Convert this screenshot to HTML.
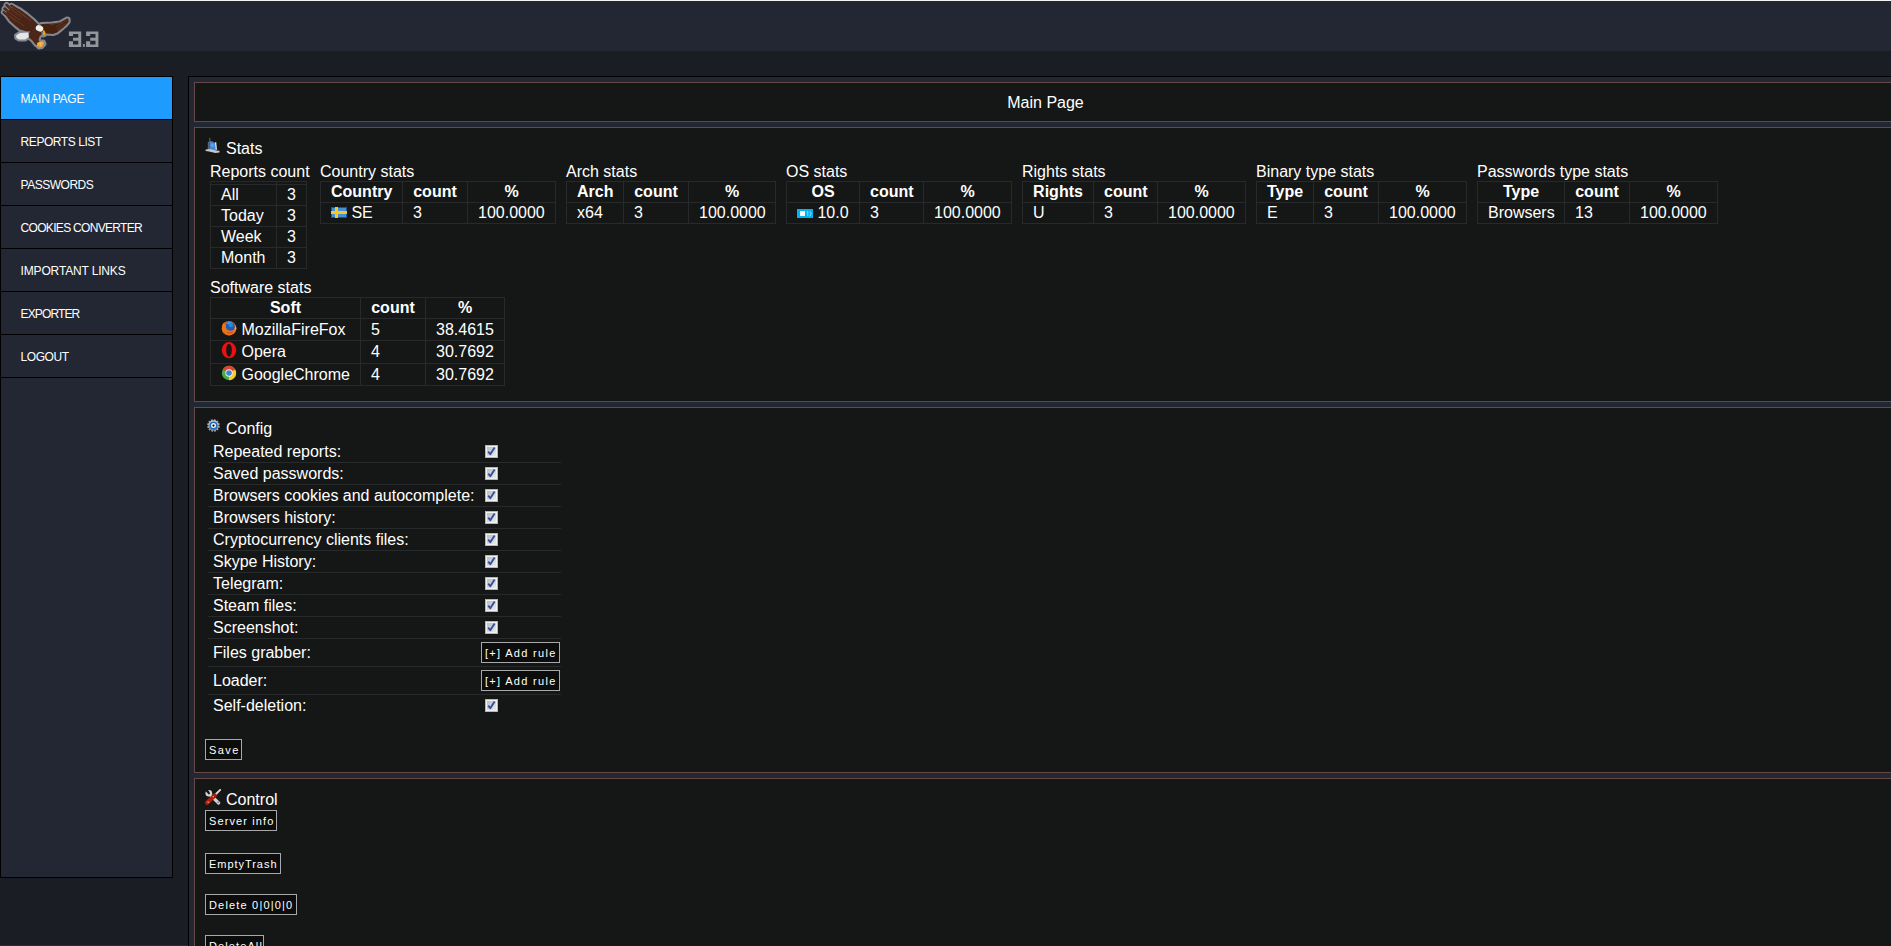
<!DOCTYPE html>
<html><head><meta charset="utf-8">
<style>
html,body{margin:0;padding:0;}
body{width:1891px;height:946px;overflow:hidden;background:#1b1d25;font-family:"Liberation Sans",sans-serif;color:#fff;position:relative;}
#topline{position:absolute;left:0;top:0;width:1891px;height:1px;background:#f4f4f2;}
#header{position:absolute;left:0;top:1px;width:1891px;height:50px;background:#232733;}
#logo{position:absolute;left:0;top:0;}
#sidebar{position:absolute;left:0;top:76px;width:171px;height:800px;border:1px solid #000;background:#232733;}
#sidebar a{display:block;box-sizing:border-box;height:43px;border-bottom:1px solid #000;color:#fff;text-decoration:none;font-size:12px;letter-spacing:0px;line-height:42px;padding-left:19.6px;padding-top:1px;}
#sidebar a.act{background:#1e9bff;}
#main{position:absolute;left:188px;top:76px;width:1720px;height:900px;border-left:1px solid #000;border-top:1px solid #000;background:#232733;}
.box{position:absolute;left:5px;width:1701px;border:1px solid #674847;background:#151716;}
#titlebox{top:5px;height:38px;}
#titlebox .t{position:absolute;left:0;right:0;top:1px;text-align:center;font-size:16px;line-height:38px;}
#stats{top:50px;height:273px;}
#config{top:330px;height:364px;}
#control{top:701px;height:400px;}
.abs{position:absolute;}
.h{position:absolute;font-size:16px;line-height:18px;white-space:nowrap;}
.blk{position:absolute;}
.cap{font-size:16px;line-height:18px;white-space:nowrap;}
table.st{border-collapse:collapse;border:1px solid #27292a;font-size:16px;}
table.st td,table.st th{border:1px solid #27292a;padding:1px 10px;line-height:18px;white-space:nowrap;}
table.st th{font-weight:bold;text-align:center;}
table.st td{text-align:left;}
table.st tr.empty td{padding:1px 10px;height:0;line-height:0;font-size:0;}
table.st td svg{vertical-align:baseline;margin-top:-3px;}
table.cfg{position:absolute;left:13px;top:33px;border-collapse:collapse;font-size:16px;}
table.cfg td{border-bottom:1px solid #262a2b;padding:0 0 0 5px;height:21px;line-height:18px;white-space:nowrap;}
table.cfg tr.big td{height:27px;}
table.cfg tr.last td{border-bottom:none;}
table.cfg td.c2{width:79px;padding-left:5px;padding-right:1px;}
.cb{display:block;width:13px;height:13px;margin-left:4px;}
.btn{display:inline-block;box-sizing:border-box;height:21px;border:1px solid #a8a8a8;background:#0c0c0c;color:#fff;font-size:11px;letter-spacing:0.55px;line-height:19px;padding:1px 0 0 3px;white-space:nowrap;}
</style></head><body>
<div id="topline"></div>
<div id="header"></div>
<div id="botline" style="position:absolute;left:0;top:945px;width:188px;height:1px;background:#2a2f34;z-index:5"></div>
<svg id="logo" width="104" height="52" viewBox="0 0 104 52">
<g fill="#84888e" stroke="#84888e" stroke-linejoin="round" stroke-linecap="round">
<path stroke-width="4.2" d="M5 14 L10 21 L15 25.5 L20 29.5 L27 31.5 L36 30.5 L39 25.5 L33 19.5 L27 14.5 L20 9.5 L14 6.5 Z"/>
<g fill="none" stroke-width="6.0"><path d="M17 15 L6.6 5"/><path d="M16 18 L4.6 8.6"/><path d="M15 21 L3.8 12.2"/><path d="M20 12 L11.4 5.8"/></g>
<path stroke-width="4.2" d="M38 25.5 L42 24 L52 23.5 L60 22.5 L67 18.5 L68.5 19 L68.5 22 L66 25 L62 28.5 L57 32.5 L53 34 L46 33.5 L42 32 L39 29 Z"/>
<path stroke-width="4.2" d="M30 31 L36 30 L41 31 L42 34 L39.5 36.5 L38.5 40 L40.5 43 L38 45.5 L35.5 44.5 L32 40 L28 37 Z"/>
<path stroke-width="4.2" d="M16 35.5 L20 33 L28 32.5 L29 37 L25 39.5 L19 39.5 L16.5 38 Z"/>
<path stroke-width="4.2" d="M37 43 L40 41.5 L43.5 41.5 L44.5 44 L42 47 L39 47.5 L37 45.5 Z"/>
<path stroke-width="3" d="M41 33 L44.5 31 L45.5 35 L43 36 Z"/>
</g>
<path d="M5 14 L10 21 L15 25.5 L20 29.5 L27 31.5 L36 30.5 L39 25.5 L33 19.5 L27 14.5 L20 9.5 L14 6.5 Z" fill="#4a2416"/>
<g fill="none" stroke-linecap="round" stroke-width="2.6"><path d="M17 15 L6.6 5" stroke="#52281a"/><path d="M16 18 L4.6 8.6" stroke="#4e2618"/><path d="M15 21 L3.8 12.2" stroke="#522a1a"/><path d="M20 12 L11.4 5.8" stroke="#4c2618"/></g>
<path d="M8 6.5 L22 17 M6 10 L20 20 M12 7 L26 17 M18 11 L31 21 M10 16 L24 26" stroke="#6e4030" stroke-width="0.7"/>
<path d="M38 25.5 L42 24 L52 23.5 L60 22.5 L67 18.5 L68.5 19 L68.5 22 L66 25 L62 28.5 L57 32.5 L53 34 L46 33.5 L42 32 L39 29 Z" fill="#45210f"/>
<path d="M56 27 L67 20 M57 29.5 L66.5 23 M58 31 L64 27 M50 25 L62 22" stroke="#6e4030" stroke-width="0.7"/>
<path d="M30 31 L36 30 L41 31 L42 34 L39.5 36.5 L38.5 40 L40.5 43 L38 45.5 L35.5 44.5 L32 40 L28 37 Z" fill="#4c2616"/>
<path d="M16 35.5 L20 33 L28 32.5 L29 37 L25 39.5 L19 39.5 L16.5 38 Z" fill="#e4e6e8"/>
<ellipse cx="39.5" cy="28.3" rx="3.9" ry="3.1" transform="rotate(25 39.5 28.3)" fill="#eeeff0"/>
<path d="M42 30 L44.5 30.5 L45.5 33 L44.5 35.5 L43 34 L43.2 32.5 Z" fill="#f0a818"/>
<path d="M37 43 L40 41.5 L43.5 41.5 L44 44 L42 47 L39 47.5 L37 45.5 Z" fill="#eca032"/>
<path d="M38 44 L43 43 M40 42 L41 47" stroke="#f8c060" stroke-width="0.8"/>
<g fill="#93979c">
<path transform="translate(68.9 31.5)" d="M0 0 H12.3 V15.4 H0 V9.7 H4.1 V12.9 H9.4 V9.3 H4.1 V6.3 H9.4 V2.5 H4.1 V4.5 H0 Z"/>
<rect x="82.9" y="44" width="1.9" height="2.9"/>
<path transform="translate(86.1 31.5)" d="M0 0 H12.3 V15.4 H0 V9.7 H4.1 V12.9 H9.4 V9.3 H4.1 V6.3 H9.4 V2.5 H4.1 V4.5 H0 Z"/>
</g>
</svg>

<div id="sidebar">
<a class="act" style="letter-spacing:-0.25px">MAIN PAGE</a>
<a style="letter-spacing:-0.44px">REPORTS LIST</a>
<a style="letter-spacing:-0.5px">PASSWORDS</a>
<a style="letter-spacing:-0.69px">COOKIES CONVERTER</a>
<a style="letter-spacing:-0.16px">IMPORTANT LINKS</a>
<a style="letter-spacing:-0.89px">EXPORTER</a>
<a style="letter-spacing:-0.46px">LOGOUT</a>
</div>
<div id="main">
<div class="box" id="titlebox"><div class="t">Main Page</div></div>
<div class="box" id="stats">
<svg class="abs" style="left:10px;top:9px" width="16" height="17" viewBox="0 0 16 17">
<path d="M4.2 1 L5.2 0.8 L5.4 4 L4.4 4.4 Z" fill="#5a6a7a"/>
<path d="M2.8 5 L4.6 4.6 L4.8 12.5 L2.8 12.8 Z" fill="#60666e"/>
<path d="M4.6 4 L7.5 4.6 L10.2 6.2 L10.6 14 L4.8 13.5 Z" fill="#3f88de"/>
<path d="M5.5 6.5 L8.5 7 L9 10 L5.8 9.5 Z" fill="#78b8f0" opacity="0.6"/>
<path d="M9.8 5.6 L11.2 5 L12 12.5 L10.6 13.5 Z" fill="#d8e2e6"/>
<path d="M0.6 12.6 L4.8 12 L11 13.4 L14.6 13.8 L14.4 15.4 L10.4 16 L4 14.6 L0.6 14 Z" fill="#c4c8cc"/>
</svg>
<div class="h" style="left:31px;top:12px">Stats</div>
<div class="blk" style="left:15px;top:35px"><div class="cap" style="margin-left:0px">Reports count</div><table class="st" style="table-layout:fixed;width:97px"><tr class="empty"><td style="width:45px"></td><td style="width:9px"></td></tr><tr><td>All</td><td>3</td></tr><tr><td>Today</td><td>3</td></tr><tr><td>Week</td><td>3</td></tr><tr><td>Month</td><td>3</td></tr></table></div>
<div class="blk" style="left:125px;top:35px"><div class="cap" style="margin-left:0px">Country stats</div><table class="st" style="table-layout:fixed;width:236px"><tr><th style="width:61px">Country</th><th style="width:44px">count</th><th style="width:67px">%</th></tr><tr><td><svg width="16" height="11" viewBox="0 0 16 11"><rect width="16" height="11" fill="#1f4fa0"/><rect x="1" y="1" width="14" height="9" fill="#4690d8"/><rect x="4" y="0" width="3" height="11" fill="#f6c824"/><rect x="0" y="4" width="16" height="3" fill="#f6c824"/></svg> SE</td><td>3</td><td>100.0000</td></tr></table></div>
<div class="blk" style="left:371px;top:35px"><div class="cap" style="margin-left:0px">Arch stats</div><table class="st" style="table-layout:fixed;width:210px"><tr><th style="width:36px">Arch</th><th style="width:44px">count</th><th style="width:66px">%</th></tr><tr><td>x64</td><td>3</td><td>100.0000</td></tr></table></div>
<div class="blk" style="left:591px;top:35px"><div class="cap" style="margin-left:0px">OS stats</div><table class="st" style="table-layout:fixed;width:226px"><tr><th style="width:52px">OS</th><th style="width:43px">count</th><th style="width:67px">%</th></tr><tr><td><svg width="16" height="9" viewBox="0 0 16 9"><rect width="16" height="9" fill="#00b2f2"/><rect x="3" y="2" width="5" height="5" fill="#f4faff"/><path d="M9.5 3 L10.8 2.5 L10.8 7 M12.5 3 Q14 2.5 14 4.5 Q14 7 12.5 7" stroke="#a8e4ff" stroke-width="0.8" fill="none"/></svg> 10.0</td><td>3</td><td>100.0000</td></tr></table></div>
<div class="blk" style="left:827px;top:35px"><div class="cap" style="margin-left:0px">Rights stats</div><table class="st" style="table-layout:fixed;width:224px"><tr><th style="width:50px">Rights</th><th style="width:43px">count</th><th style="width:67px">%</th></tr><tr><td>U</td><td>3</td><td>100.0000</td></tr></table></div>
<div class="blk" style="left:1061px;top:35px"><div class="cap" style="margin-left:0px">Binary type stats</div><table class="st" style="table-layout:fixed;width:211px"><tr><th style="width:36px">Type</th><th style="width:44px">count</th><th style="width:67px">%</th></tr><tr><td>E</td><td>3</td><td>100.0000</td></tr></table></div>
<div class="blk" style="left:1282px;top:35px"><div class="cap" style="margin-left:0px">Passwords type stats</div><table class="st" style="table-layout:fixed;width:241px"><tr><th style="width:66px">Type</th><th style="width:44px">count</th><th style="width:67px">%</th></tr><tr><td>Browsers</td><td>13</td><td>100.0000</td></tr></table></div>
<div class="blk" style="left:15px;top:151px"><div class="cap" style="margin-left:0px">Software stats</div><table class="st" style="table-layout:fixed;width:295px"><tr><th style="width:129px">Soft</th><th style="width:44px">count</th><th style="width:58px">%</th></tr><tr style="height:22px"><td><svg style="position:relative;top:1px" width="16" height="16" viewBox="0 0 16 16"><circle cx="8" cy="8.2" r="7.3" fill="#e5661c"/><circle cx="8.6" cy="6.6" r="5.2" fill="#1d5cb8"/><path d="M5 3.2 Q8 0.8 11.5 2.2 Q9 2.5 8 4.5 Q6.5 4 5 3.2 Z" fill="#3aa0ec"/><circle cx="10" cy="5" r="2.2" fill="#2a88dc"/><path d="M1 6.5 Q1.5 3 3.5 2.2 Q3 4.2 4 5.2 Q4.2 3.8 5.5 3.6 Q4.5 6 5 8 Q6 10.5 9.5 10.8 Q12.5 10.8 14 8.2 Q14.5 6.5 13.8 4.5 Q15.6 6.5 15.2 9.5 Q14.2 13.8 9.5 15.2 Q4.5 16 1.8 12 Q0.6 9.5 1 6.5 Z" fill="#ea7418"/><path d="M2.5 12.5 Q5 15.6 9.5 15.2 Q6 16.4 2.8 13.5 Z" fill="#c8301a"/><path d="M14 5 Q15.6 7.5 15 10 L14 9 Q14.6 7 14 5 Z" fill="#f8c030"/><path d="M6 12.5 Q9 13.6 12 12" stroke="#d84818" stroke-width="1" fill="none"/></svg> MozillaFireFox</td><td>5</td><td>38.4615</td></tr><tr style="height:23px"><td><svg style="position:relative;top:2px" width="16" height="17" viewBox="0 0 16 17"><ellipse cx="8" cy="8.2" rx="7.2" ry="8.1" fill="#ec1010"/><ellipse cx="8" cy="8.2" rx="2.8" ry="6.5" fill="#151716"/></svg> Opera</td><td>4</td><td>30.7692</td></tr><tr style="height:22px"><td><svg style="position:relative;top:1px" width="16" height="16" viewBox="0 0 16 16"><circle cx="8" cy="8" r="7.2" fill="#4aac44"/><path d="M8 8 L1.8 4.4 A7.2 7.2 0 0 1 14.2 4.4 Z" fill="#dc4434"/><path d="M8 8 L14.2 4.4 A7.2 7.2 0 0 1 8 15.2 Z" fill="#f6cc2c"/><circle cx="8" cy="8" r="3.7" fill="#eef0f2"/><circle cx="8" cy="8" r="2.8" fill="#3d84d4"/></svg> GoogleChrome</td><td>4</td><td>30.7692</td></tr></table></div>

</div>
<div class="box" id="config">
<svg class="abs" style="left:12px;top:11px" width="13" height="13" viewBox="0 0 13 13">
<defs><linearGradient id="gg" x1="0" y1="0" x2="0" y2="1"><stop offset="0" stop-color="#e8e8e8"/><stop offset="1" stop-color="#74787c"/></linearGradient></defs>
<g fill="#a0a4a8"><rect x="5.4" y="0.2" width="2.0" height="2.3" transform="rotate(15 6.5 6.5)"/><rect x="5.4" y="0.2" width="2.0" height="2.3" transform="rotate(45 6.5 6.5)"/><rect x="5.4" y="0.2" width="2.0" height="2.3" transform="rotate(75 6.5 6.5)"/><rect x="5.4" y="0.2" width="2.0" height="2.3" transform="rotate(105 6.5 6.5)"/><rect x="5.4" y="0.2" width="2.0" height="2.3" transform="rotate(135 6.5 6.5)"/><rect x="5.4" y="0.2" width="2.0" height="2.3" transform="rotate(165 6.5 6.5)"/><rect x="5.4" y="0.2" width="2.0" height="2.3" transform="rotate(195 6.5 6.5)"/><rect x="5.4" y="0.2" width="2.0" height="2.3" transform="rotate(225 6.5 6.5)"/><rect x="5.4" y="0.2" width="2.0" height="2.3" transform="rotate(255 6.5 6.5)"/><rect x="5.4" y="0.2" width="2.0" height="2.3" transform="rotate(285 6.5 6.5)"/><rect x="5.4" y="0.2" width="2.0" height="2.3" transform="rotate(315 6.5 6.5)"/><rect x="5.4" y="0.2" width="2.0" height="2.3" transform="rotate(345 6.5 6.5)"/></g><circle cx="6.5" cy="6.5" r="5.0" fill="url(#gg)"/>
<circle cx="6.5" cy="6.6" r="4.0" fill="#1f6cc8"/>
<circle cx="6.5" cy="6.6" r="2.5" fill="#eef4f4"/>
<circle cx="6.5" cy="6.6" r="1.1" fill="#050505"/>
</svg><div class="h" style="left:31px;top:12px">Config</div>
<div class="abs" style="left:13px;top:33px;width:353px;height:21px;border-bottom:1px solid #262a2b;"></div><div class="h" style="left:18px;top:33px;line-height:21px">Repeated reports:</div><svg class="abs" style="left:290px;top:37px" width="13" height="13" viewBox="0 0 13 13"><defs><linearGradient id="g0" x1="0" y1="0" x2="1" y2="1"><stop offset="0" stop-color="#b6bcc6"/><stop offset="1" stop-color="#ececec"/></linearGradient></defs><rect x="0.5" y="0.5" width="12" height="12" fill="#f2f2f2" stroke="#b4b4b4"/><rect x="2" y="2" width="9" height="9" fill="url(#g0)"/><path d="M3.2 6.6 L5.3 9.2 L9.6 2.6" stroke="#34509c" stroke-width="1.9" fill="none" stroke-linejoin="round"/></svg>
<div class="abs" style="left:13px;top:55px;width:353px;height:21px;border-bottom:1px solid #262a2b;"></div><div class="h" style="left:18px;top:55px;line-height:21px">Saved passwords:</div><svg class="abs" style="left:290px;top:59px" width="13" height="13" viewBox="0 0 13 13"><defs><linearGradient id="g1" x1="0" y1="0" x2="1" y2="1"><stop offset="0" stop-color="#b6bcc6"/><stop offset="1" stop-color="#ececec"/></linearGradient></defs><rect x="0.5" y="0.5" width="12" height="12" fill="#f2f2f2" stroke="#b4b4b4"/><rect x="2" y="2" width="9" height="9" fill="url(#g1)"/><path d="M3.2 6.6 L5.3 9.2 L9.6 2.6" stroke="#34509c" stroke-width="1.9" fill="none" stroke-linejoin="round"/></svg>
<div class="abs" style="left:13px;top:77px;width:353px;height:21px;border-bottom:1px solid #262a2b;"></div><div class="h" style="left:18px;top:77px;line-height:21px">Browsers cookies and autocomplete:</div><svg class="abs" style="left:290px;top:81px" width="13" height="13" viewBox="0 0 13 13"><defs><linearGradient id="g2" x1="0" y1="0" x2="1" y2="1"><stop offset="0" stop-color="#b6bcc6"/><stop offset="1" stop-color="#ececec"/></linearGradient></defs><rect x="0.5" y="0.5" width="12" height="12" fill="#f2f2f2" stroke="#b4b4b4"/><rect x="2" y="2" width="9" height="9" fill="url(#g2)"/><path d="M3.2 6.6 L5.3 9.2 L9.6 2.6" stroke="#34509c" stroke-width="1.9" fill="none" stroke-linejoin="round"/></svg>
<div class="abs" style="left:13px;top:99px;width:353px;height:21px;border-bottom:1px solid #262a2b;"></div><div class="h" style="left:18px;top:99px;line-height:21px">Browsers history:</div><svg class="abs" style="left:290px;top:103px" width="13" height="13" viewBox="0 0 13 13"><defs><linearGradient id="g3" x1="0" y1="0" x2="1" y2="1"><stop offset="0" stop-color="#b6bcc6"/><stop offset="1" stop-color="#ececec"/></linearGradient></defs><rect x="0.5" y="0.5" width="12" height="12" fill="#f2f2f2" stroke="#b4b4b4"/><rect x="2" y="2" width="9" height="9" fill="url(#g3)"/><path d="M3.2 6.6 L5.3 9.2 L9.6 2.6" stroke="#34509c" stroke-width="1.9" fill="none" stroke-linejoin="round"/></svg>
<div class="abs" style="left:13px;top:121px;width:353px;height:21px;border-bottom:1px solid #262a2b;"></div><div class="h" style="left:18px;top:121px;line-height:21px">Cryptocurrency clients files:</div><svg class="abs" style="left:290px;top:125px" width="13" height="13" viewBox="0 0 13 13"><defs><linearGradient id="g4" x1="0" y1="0" x2="1" y2="1"><stop offset="0" stop-color="#b6bcc6"/><stop offset="1" stop-color="#ececec"/></linearGradient></defs><rect x="0.5" y="0.5" width="12" height="12" fill="#f2f2f2" stroke="#b4b4b4"/><rect x="2" y="2" width="9" height="9" fill="url(#g4)"/><path d="M3.2 6.6 L5.3 9.2 L9.6 2.6" stroke="#34509c" stroke-width="1.9" fill="none" stroke-linejoin="round"/></svg>
<div class="abs" style="left:13px;top:143px;width:353px;height:21px;border-bottom:1px solid #262a2b;"></div><div class="h" style="left:18px;top:143px;line-height:21px">Skype History:</div><svg class="abs" style="left:290px;top:147px" width="13" height="13" viewBox="0 0 13 13"><defs><linearGradient id="g5" x1="0" y1="0" x2="1" y2="1"><stop offset="0" stop-color="#b6bcc6"/><stop offset="1" stop-color="#ececec"/></linearGradient></defs><rect x="0.5" y="0.5" width="12" height="12" fill="#f2f2f2" stroke="#b4b4b4"/><rect x="2" y="2" width="9" height="9" fill="url(#g5)"/><path d="M3.2 6.6 L5.3 9.2 L9.6 2.6" stroke="#34509c" stroke-width="1.9" fill="none" stroke-linejoin="round"/></svg>
<div class="abs" style="left:13px;top:165px;width:353px;height:21px;border-bottom:1px solid #262a2b;"></div><div class="h" style="left:18px;top:165px;line-height:21px">Telegram:</div><svg class="abs" style="left:290px;top:169px" width="13" height="13" viewBox="0 0 13 13"><defs><linearGradient id="g6" x1="0" y1="0" x2="1" y2="1"><stop offset="0" stop-color="#b6bcc6"/><stop offset="1" stop-color="#ececec"/></linearGradient></defs><rect x="0.5" y="0.5" width="12" height="12" fill="#f2f2f2" stroke="#b4b4b4"/><rect x="2" y="2" width="9" height="9" fill="url(#g6)"/><path d="M3.2 6.6 L5.3 9.2 L9.6 2.6" stroke="#34509c" stroke-width="1.9" fill="none" stroke-linejoin="round"/></svg>
<div class="abs" style="left:13px;top:187px;width:353px;height:21px;border-bottom:1px solid #262a2b;"></div><div class="h" style="left:18px;top:187px;line-height:21px">Steam files:</div><svg class="abs" style="left:290px;top:191px" width="13" height="13" viewBox="0 0 13 13"><defs><linearGradient id="g7" x1="0" y1="0" x2="1" y2="1"><stop offset="0" stop-color="#b6bcc6"/><stop offset="1" stop-color="#ececec"/></linearGradient></defs><rect x="0.5" y="0.5" width="12" height="12" fill="#f2f2f2" stroke="#b4b4b4"/><rect x="2" y="2" width="9" height="9" fill="url(#g7)"/><path d="M3.2 6.6 L5.3 9.2 L9.6 2.6" stroke="#34509c" stroke-width="1.9" fill="none" stroke-linejoin="round"/></svg>
<div class="abs" style="left:13px;top:209px;width:353px;height:21px;border-bottom:1px solid #262a2b;"></div><div class="h" style="left:18px;top:209px;line-height:21px">Screenshot:</div><svg class="abs" style="left:290px;top:213px" width="13" height="13" viewBox="0 0 13 13"><defs><linearGradient id="g8" x1="0" y1="0" x2="1" y2="1"><stop offset="0" stop-color="#b6bcc6"/><stop offset="1" stop-color="#ececec"/></linearGradient></defs><rect x="0.5" y="0.5" width="12" height="12" fill="#f2f2f2" stroke="#b4b4b4"/><rect x="2" y="2" width="9" height="9" fill="url(#g8)"/><path d="M3.2 6.6 L5.3 9.2 L9.6 2.6" stroke="#34509c" stroke-width="1.9" fill="none" stroke-linejoin="round"/></svg>
<div class="abs" style="left:13px;top:231px;width:353px;height:27px;border-bottom:1px solid #262a2b;"></div><div class="h" style="left:18px;top:231px;line-height:27px">Files grabber:</div><div class="btn abs" style="left:286px;top:234px;width:79px;letter-spacing:1.31px">[+] Add rule</div>
<div class="abs" style="left:13px;top:259px;width:353px;height:27px;border-bottom:1px solid #262a2b;"></div><div class="h" style="left:18px;top:259px;line-height:27px">Loader:</div><div class="btn abs" style="left:286px;top:262px;width:79px;letter-spacing:1.31px">[+] Add rule</div>
<div class="abs" style="left:13px;top:287px;width:353px;height:21px;"></div><div class="h" style="left:18px;top:287px;line-height:21px">Self-deletion:</div><svg class="abs" style="left:290px;top:291px" width="13" height="13" viewBox="0 0 13 13"><defs><linearGradient id="g11" x1="0" y1="0" x2="1" y2="1"><stop offset="0" stop-color="#b6bcc6"/><stop offset="1" stop-color="#ececec"/></linearGradient></defs><rect x="0.5" y="0.5" width="12" height="12" fill="#f2f2f2" stroke="#b4b4b4"/><rect x="2" y="2" width="9" height="9" fill="url(#g11)"/><path d="M3.2 6.6 L5.3 9.2 L9.6 2.6" stroke="#34509c" stroke-width="1.9" fill="none" stroke-linejoin="round"/></svg>
<div class="btn abs" style="left:10px;top:331px;width:37px;letter-spacing:1.4px">Save</div>

</div>
<div class="box" id="control">
<svg class="abs" style="left:10px;top:10px" width="16" height="16" viewBox="0 0 16 16">
<path d="M5 5.6 L13.6 14" stroke="#cfd0d2" stroke-width="3.2" stroke-linecap="round"/>
<circle cx="3.8" cy="4.2" r="3.3" fill="#d6d7d9"/>
<path d="M0 1.6 L2.6 0 L4.6 3.2 L3.3 5 Z" fill="#151716"/>
<circle cx="3.9" cy="4.3" r="1.1" fill="#151716"/>
<circle cx="13.1" cy="13.3" r="0.7" fill="#505050"/>
<path d="M9 7 L15.2 0.9" stroke="#d8d9db" stroke-width="1.9" stroke-linecap="round"/>
<path d="M9.6 6.4 L2.2 13.8" stroke="#b41c0e" stroke-width="4.2" stroke-linecap="round"/>
<path d="M8.2 6 L10.6 8.4" stroke="#a81808" stroke-width="2.2"/>
<circle cx="3" cy="13" r="0.9" fill="#e85a40"/>
<circle cx="8.2" cy="7.6" r="0.8" fill="#e0a050"/>
<circle cx="3.8" cy="13.3" r="0.6" fill="#e0a050"/>
</svg><div class="h" style="left:31px;top:12px">Control</div>
<div class="btn abs" style="left:10px;top:31px;width:72px;letter-spacing:1.12px">Server info</div>
<div class="btn abs" style="left:10px;top:74px;width:76px;letter-spacing:0.96px">EmptyTrash</div>
<div class="btn abs" style="left:10px;top:115px;width:92px;letter-spacing:1.18px">Delete 0|0|0|0</div>
<div class="btn abs" style="left:10px;top:156px;width:59px;letter-spacing:1.1px">DeleteAll</div>

</div>
</div>
</body></html>
